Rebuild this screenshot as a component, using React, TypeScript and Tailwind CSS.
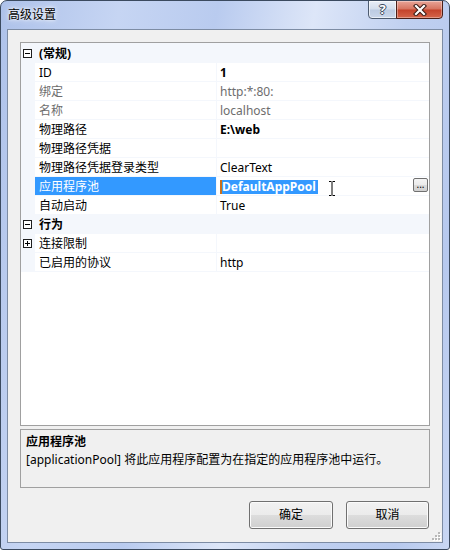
import React from "react";

type Row =
  | { type: "cat"; label: string; first?: boolean }
  | {
      type: "prop";
      name: string;
      value: string;
      bold?: boolean;
      gray?: boolean;
      selected?: boolean;
      plus?: boolean;
    };

const rows: Row[] = [
  { type: "cat", label: "(常规)", first: true },
  { type: "prop", name: "ID", value: "1", bold: true },
  { type: "prop", name: "绑定", value: "http:*:80:", gray: true },
  { type: "prop", name: "名称", value: "localhost", gray: true },
  { type: "prop", name: "物理路径", value: "E:\\web", bold: true },
  { type: "prop", name: "物理路径凭据", value: "" },
  { type: "prop", name: "物理路径凭据登录类型", value: "ClearText" },
  { type: "prop", name: "应用程序池", value: "DefaultAppPool", bold: true, selected: true },
  { type: "prop", name: "自动启动", value: "True" },
  { type: "cat", label: "行为" },
  { type: "prop", name: "连接限制", value: "", plus: true },
  { type: "prop", name: "已启用的协议", value: "http" },
];

function Box({ plus }: { plus?: boolean }) {
  return (
    <svg width="9" height="9" viewBox="0 0 9 9" className="block">
      <rect x="0.5" y="0.5" width="8" height="8" fill="#ffffff" stroke="#1e1e1e" />
      <line x1="2" y1="4.5" x2="7" y2="4.5" stroke="#000" />
      {plus && <line x1="4.5" y1="2" x2="4.5" y2="7" stroke="#000" />}
    </svg>
  );
}

function IBeam() {
  return (
    <svg width="8" height="17" viewBox="0 0 8 17" className="block">
      <path d="M1 1.5h2.5M4.5 1.5H7M4 2v13M1 15.5h2.5M4.5 15.5H7" stroke="#ffffff" strokeWidth="3" fill="none" />
      <path d="M1 1.5h2.5M4.5 1.5H7M4 2v13M1 15.5h2.5M4.5 15.5H7" stroke="#000000" strokeWidth="1" fill="none" />
    </svg>
  );
}

function Grip() {
  return (
    <svg width="10" height="10" viewBox="0 0 10 10" className="block">
      {[
        [7, 1],
        [4, 4],
        [7, 4],
        [1, 7],
        [4, 7],
        [7, 7],
      ].map(([x, y], i) => (
        <g key={i}>
          <rect x={x + 1} y={y + 1} width="2" height="2" fill="#ffffff" />
          <rect x={x} y={y} width="2" height="2" fill="#b8b8b8" />
        </g>
      ))}
    </svg>
  );
}

export default function App() {
  return (
    <div
      className="w-[450px] h-[550px] flex flex-col rounded-t-[7px] rounded-b-[3px] border border-[#3b4a5f] bg-[linear-gradient(100deg,#aec2ea_0%,#c6d5f3_22%,#b9cbef_40%,#dde6f8_58%,#c0d0f0_75%,#b7c9ee_90%,#c9d7f3_100%)] overflow-hidden"
      style={{ fontFamily: '"Noto Sans", "Noto Sans CJK SC", sans-serif' }}
    >
      {/* title bar */}
      <div className="h-[28px] flex items-start shrink-0">
        <div className="pl-[7px] pt-[5px] text-[12px] leading-[18px] text-black [text-shadow:0_0_6px_#ffffff,0_0_3px_#ffffff]">
          高级设置
        </div>
        <div className="ml-auto mr-[6px] flex">
          <div className="w-[29px] h-[19px] -mt-[1px] rounded-bl-[4px] border border-[#4d5b70] bg-[linear-gradient(#e9eef7_0%,#d3ddec_48%,#bccbe2_52%,#cad6ea_100%)] shadow-[inset_0_0_0_1px_rgba(255,255,255,0.6)] flex items-center justify-center">
            <span className="text-[13px] leading-[13px] font-bold text-white [text-shadow:1px_0_0_#3c4a5e,-1px_0_0_#3c4a5e,0_1px_0_#3c4a5e,0_-1px_0_#3c4a5e]">
              ?
            </span>
          </div>
          <div className="w-[47px] h-[19px] -mt-[1px] -ml-[1px] rounded-br-[4px] border border-[#4a1f18] bg-[linear-gradient(#e9a598_0%,#d6735f_48%,#c4422a_52%,#d5654a_100%)] shadow-[inset_0_0_0_1px_rgba(255,255,255,0.35)] flex items-center justify-center">
            <svg width="14" height="12" viewBox="0 0 14 12" className="block">
              <path d="M3 2 L11 10 M11 2 L3 10" stroke="#3a1a14" strokeWidth="4.2" strokeLinecap="square" />
              <path d="M3 2 L11 10 M11 2 L3 10" stroke="#ffffff" strokeWidth="2.2" strokeLinecap="square" />
            </svg>
          </div>
        </div>
      </div>

      {/* client area */}
      <div className="flex-1 mx-[6px] mb-[6px] border border-[#7d8ca4] bg-[#f0f0f0] flex flex-col pt-[12px] pl-[12px] pr-[12px] relative">
        {/* property grid */}
        <div className="h-[384px] border border-[#a0a0a0] bg-white flex flex-col text-[12px] leading-[18px] overflow-hidden">
          {rows.map((r, i) => {
            if (r.type === "cat") {
              return (
                <div
                  key={i}
                  className={`${r.first ? "h-[20px] pt-[1px]" : "h-[19px]"} bg-[#f4f7fc] flex items-center shrink-0`}
                >
                  <div className="w-[14px] flex justify-end pr-[3px]">
                    <Box />
                  </div>
                  <div className="pl-[4px] pt-[1px] font-bold text-black">{r.label}</div>
                </div>
              );
            }
            return (
              <div key={i} className="h-[19px] border-b border-[#f4f7fc] flex shrink-0">
                <div className="w-[14px] bg-[#f4f7fc] flex items-center justify-end pr-[3px]">
                  {r.plus && <Box plus />}
                </div>
                <div
                  className={`w-[182px] border-r border-[#f4f7fc] pl-[4px] pt-[1px] whitespace-nowrap ${
                    r.selected ? "bg-[#3399ff] text-white" : r.gray ? "text-[#6d6d6d]" : "text-black"
                  }`}
                >
                  {r.name}
                </div>
                <div className="flex-1 flex items-center pl-[3px] whitespace-nowrap">
                  {r.selected ? (
                    <>
                      <span className="h-[14px] mt-[1px] flex items-center bg-[#3399ff] text-white font-bold border-l-[2px] border-[#c8701e] pr-[2px] leading-[14px]">
                        {r.value}
                      </span>
                      <span className="ml-[10px] mt-[4px]">
                        <IBeam />
                      </span>
                      <span className="ml-auto mr-[1px] mt-[-2px] w-[15px] h-[14px] rounded-[2px] border border-[#707070] bg-[linear-gradient(#f4f4f4_0%,#ebebeb_50%,#dcdcdc_50%,#d0d0d0_100%)] flex items-end justify-center text-[10px] leading-[10px] text-black pb-[2px]">
                        ...
                      </span>
                    </>
                  ) : (
                    <span className={`pt-[1px] ${r.bold ? "font-bold text-black" : r.gray ? "text-[#6d6d6d]" : "text-black"}`}>
                      {r.value}
                    </span>
                  )}
                </div>
              </div>
            );
          })}
        </div>

        {/* description */}
        <div className="mt-[3px] h-[59px] border border-[#a0a0a0] pl-[5px] pt-[3px] text-[12px] leading-[18px] text-black">
          <div className="font-bold">应用程序池</div>
          <div>[applicationPool] 将此应用程序配置为在指定的应用程序池中运行。</div>
        </div>

        {/* buttons */}
        <div className="mt-[13px] flex justify-end gap-[13px] pr-[1px]">
          <button className="w-[84px] h-[28px] rounded-[3px] border border-[#707070] bg-[linear-gradient(#f2f2f2_0%,#ebebeb_50%,#dddddd_50%,#cfcfcf_100%)] shadow-[inset_0_0_0_1px_#fbfbfb] text-[12px] text-black">
            确定
          </button>
          <button className="w-[83px] h-[28px] rounded-[3px] border border-[#707070] bg-[linear-gradient(#f2f2f2_0%,#ebebeb_50%,#dddddd_50%,#cfcfcf_100%)] shadow-[inset_0_0_0_1px_#fbfbfb] text-[12px] text-black">
            取消
          </button>
        </div>

        <div className="absolute right-[1px] bottom-[1px]">
          <Grip />
        </div>
      </div>
    </div>
  );
}
